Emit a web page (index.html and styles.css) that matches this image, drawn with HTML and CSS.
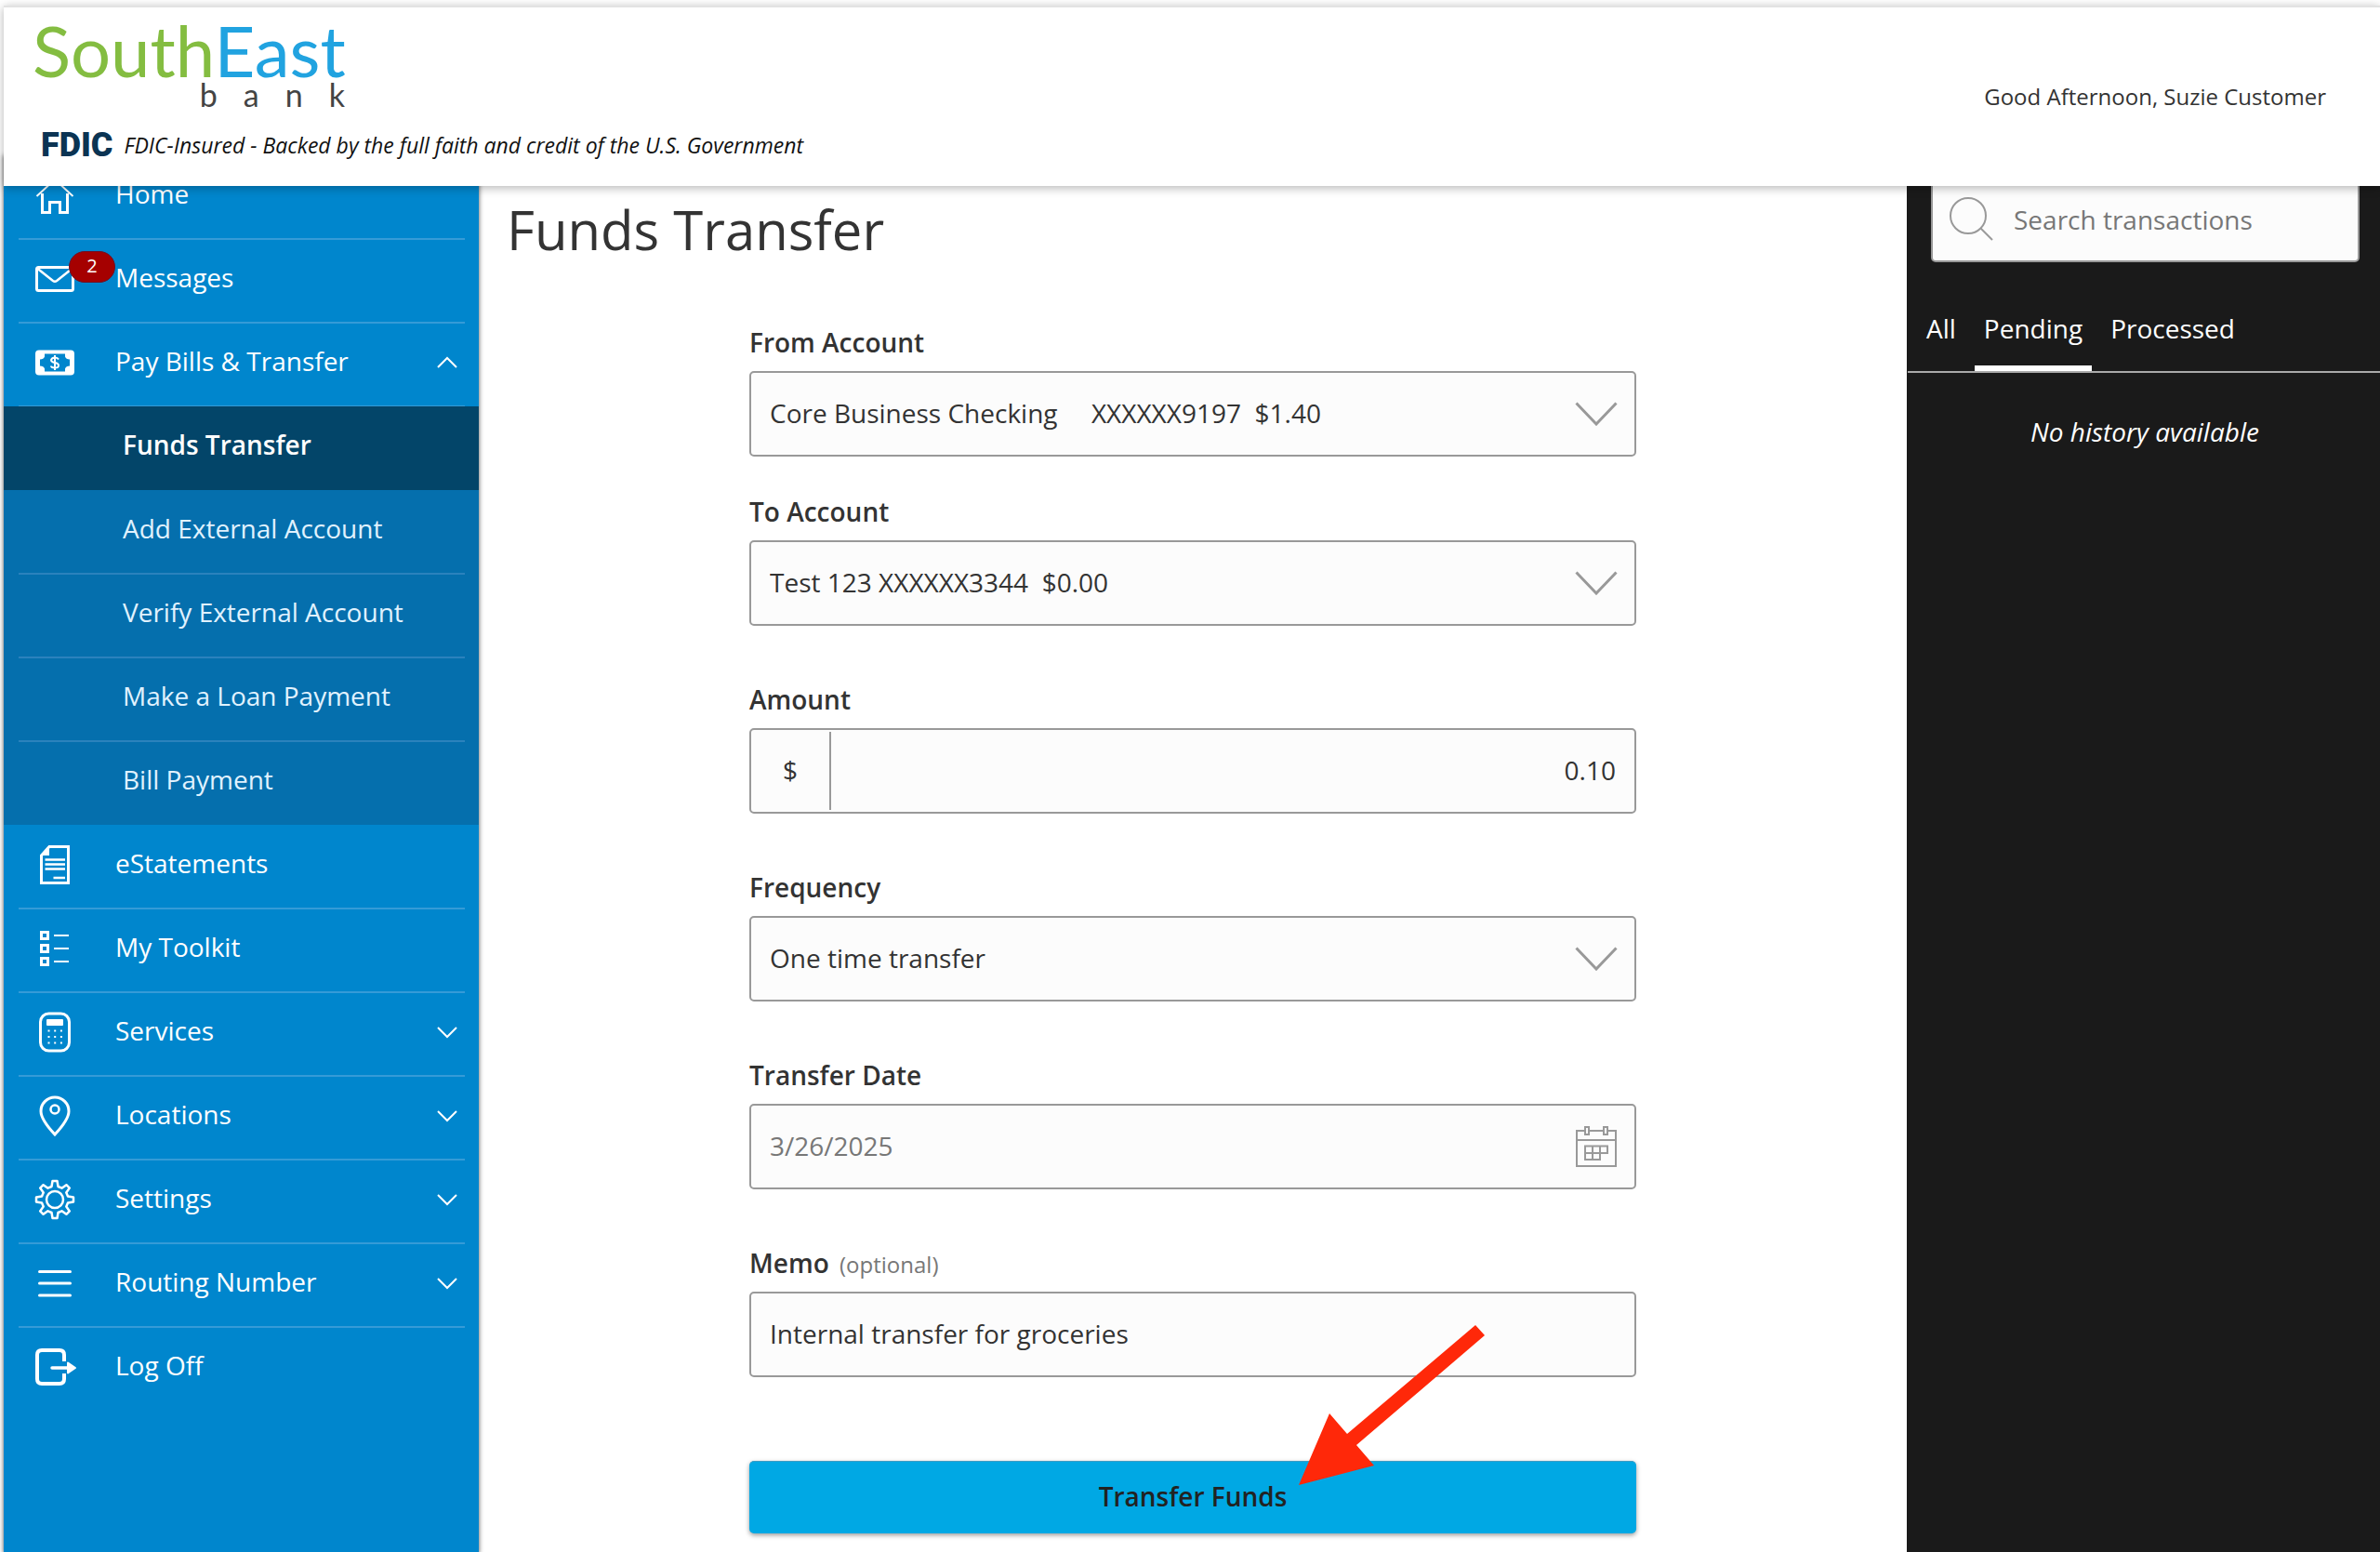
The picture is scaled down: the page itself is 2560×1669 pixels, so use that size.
FILE: index.html
```html
<!DOCTYPE html>
<html lang="en">
<head>
<meta charset="utf-8">
<meta name="viewport" content="width=device-width, initial-scale=1">
<title>Funds Transfer - SouthEast Bank</title>
<link rel="stylesheet" href="styles.css">
</head>
<body>
<div class="page">
  <header class="header">
    <div class="brand">
      <a class="logo" href="#"><span class="logo-name"><span class="logo-south">South</span><span class="logo-east">East</span></span><span class="logo-bank">bank</span></a>
      <p class="fdic"><span class="fdic-mark">FDIC</span><span class="fdic-text">FDIC-Insured - Backed by the full faith and credit of the U.S. Government</span></p>
    </div>
    <p class="greeting">Good Afternoon, Suzie Customer</p>
  </header>

  <div class="content">
    <nav class="nav" aria-label="Main">
      <ul class="menu">
        <li><a class="item" href="#">
          <svg class="icon" viewBox="0 0 44 44"><path d="M2.500 23 22 5l19.500 18" stroke-width="2"/><path d="M8.500 20v20.500h8V29.500h11v11h8V20" stroke-width="3"/></svg>
          <span class="text">Home</span></a></li>
        <li><a class="item" href="#">
          <svg class="icon" viewBox="0 0 44 44"><rect x="2.500" y="9.500" width="39" height="25" rx="2" stroke-width="3"/><path d="M3 10.500l17 13.500q2 1.500 4 0L41 10.500" stroke-width="2.500"/></svg>
          <span class="badge">2</span>
          <span class="text">Messages</span></a></li>
        <li><a class="item" href="#">
          <svg class="icon" viewBox="0 0 44 44"><rect x="1" y="8.500" width="42" height="27" rx="4" fill="#fff" stroke="none"/><path d="M11 12.500h22v3q1 3 5 3v7q-4 0-5 3v3H11v-3q-1-3-5-3v-7q4 0 5-3z" fill="#0086cd" stroke="none"/><path d="M26 18.500q-1-2-4-2t-4 2.500q0 2.300 4 3t4 3q0 2.500-4 2.500t-4-2M22 14v16" stroke-width="2"/></svg>
          <span class="text">Pay Bills &amp; Transfer</span>
          <svg class="chev" viewBox="0 0 24 14"><path d="M2 12 12 2l10 10"/></svg></a>
          <ul class="submenu">
            <li><a class="item active" href="#" aria-current="page"><span class="text">Funds Transfer</span></a></li>
            <li><a class="item" href="#"><span class="text">Add External Account</span></a></li>
            <li><a class="item" href="#"><span class="text">Verify External Account</span></a></li>
            <li><a class="item" href="#"><span class="text">Make a Loan Payment</span></a></li>
            <li><a class="item" href="#"><span class="text">Bill Payment</span></a></li>
          </ul></li>
        <li><a class="item" href="#">
          <svg class="icon" viewBox="0 0 44 44"><path d="M7.500 12 16 2.500h20.500v39h-29z" stroke-width="3"/><path d="M6 12 16 1v11z" fill="#fff" stroke="none"/><path d="M11.500 16.500h21.500M11.500 21.500h21.500M11.500 26.500h21.500M20.500 36H33" stroke-width="2.500"/></svg>
          <span class="text">eStatements</span></a></li>
        <li><a class="item" href="#">
          <svg class="icon" viewBox="0 0 44 44"><path d="M7.500 4.500h7v7h-7zM7.500 18.500h7v7h-7zM7.500 32.500h7v7h-7z" stroke-width="3"/><path d="M21 8h16M21 22h16M21 36h16" stroke-width="2"/></svg>
          <span class="text">My Toolkit</span></a></li>
        <li><a class="item" href="#">
          <svg class="icon" viewBox="0 0 44 44"><rect x="6.500" y="2" width="31" height="40" rx="9" stroke-width="3"/><rect x="13" y="8" width="18" height="7" rx="1" fill="#fff" stroke="none"/><path d="M14.500 20.500h15.500M14.500 27h15.500M14.500 33.500h15.500" stroke-width="2" stroke-dasharray="2 4.700"/></svg>
          <span class="text">Services</span>
          <svg class="chev" viewBox="0 0 24 14"><path d="M2 2l10 10L22 2"/></svg></a></li>
        <li><a class="item" href="#">
          <svg class="icon" viewBox="0 0 44 44"><path d="M22 42Q7 26 7 17a15 15 0 0 1 30 0Q37 26 22 42z" stroke-width="3"/><circle cx="22" cy="15" r="4.500" stroke-width="2.500"/></svg>
          <span class="text">Locations</span>
          <svg class="chev" viewBox="0 0 24 14"><path d="M2 2l10 10L22 2"/></svg></a></li>
        <li><a class="item" href="#">
          <svg class="icon" viewBox="0 0 44 44"><path stroke-width="2.500" stroke-linejoin="round" d="M18.500 8 19.500 2h5l1 6 4 1.700 4.900-3.500 3.400 3.400-3.500 4.900 1.700 4 6 1v5l-6 1-1.700 4 3.500 4.900-3.400 3.400-4.900-3.500-4 1.700-1 6h-5l-1-6-4-1.700-4.900 3.500-3.400-3.400 3.500-4.900-1.700-4-6-1v-5l6-1 1.700-4-3.500-4.900 3.400-3.400 4.900 3.500z"/><circle cx="22" cy="22" r="9" stroke-width="2.500"/></svg>
          <span class="text">Settings</span>
          <svg class="chev" viewBox="0 0 24 14"><path d="M2 2l10 10L22 2"/></svg></a></li>
        <li><a class="item" href="#">
          <svg class="icon" viewBox="0 0 44 44"><path d="M5.500 9.500h33M5.500 22h33M5.500 35h33" stroke-width="3" stroke-linecap="round"/></svg>
          <span class="text">Routing Number</span>
          <svg class="chev" viewBox="0 0 24 14"><path d="M2 2l10 10L22 2"/></svg></a></li>
        <li><a class="item last" href="#">
          <svg class="icon" viewBox="0 0 44 44"><path d="M32 16V9q0-5-5-5H8Q3 4 3 9v26q0 5 5 5h19q5 0 5-5v-6" stroke-width="4"/><path d="M19 23h18" stroke-width="3.500" stroke-linecap="round"/><path d="M36 17.500 44 23l-8 5.500z" fill="#fff" stroke-width="2" stroke-linejoin="round"/></svg>
          <span class="text">Log Off</span></a></li>
      </ul>
    </nav>

    <main class="main">
      <h1 class="title">Funds Transfer</h1>
      <form class="form">
        <div class="field near">
          <label for="from">From Account</label>
          <div class="control"><select id="from"><option>Core Business Checking&nbsp;&nbsp;&nbsp;&nbsp; XXXXXX9197&nbsp; $1.40</option></select>
            <svg class="arrow" viewBox="0 0 46 26"><path d="M1.500 1.500 23 24 44.500 1.500"/></svg></div>
        </div>
        <div class="field">
          <label for="to">To Account</label>
          <div class="control"><select id="to"><option>Test 123 XXXXXX3344&nbsp; $0.00</option></select>
            <svg class="arrow" viewBox="0 0 46 26"><path d="M1.500 1.500 23 24 44.500 1.500"/></svg></div>
        </div>
        <div class="field">
          <label for="amount">Amount</label>
          <div class="control"><span class="prefix">$</span><input class="amount" id="amount" type="text" value="0.10"></div>
        </div>
        <div class="field">
          <label for="frequency">Frequency</label>
          <div class="control"><select id="frequency"><option>One time transfer</option></select>
            <svg class="arrow" viewBox="0 0 46 26"><path d="M1.500 1.500 23 24 44.500 1.500"/></svg></div>
        </div>
        <div class="field">
          <label for="date">Transfer Date</label>
          <div class="control"><input class="date" id="date" type="text" value="3/26/2025">
            <svg class="calendar" viewBox="0 0 46 46"><path d="M10 6H2v38h42V6h-8M15 6h16M2 16h42M11 2h4v8h-4zM31 2h4v8h-4zM11 22.500h24v7.500h-8v7H11zM11 30h16M19 22.500V37M27 22.500V30"/></svg></div>
        </div>
        <div class="field">
          <label for="memo">Memo <span class="optional">(optional)</span></label>
          <div class="control"><input id="memo" type="text" value="Internal transfer for groceries"></div>
        </div>
        <div class="actions">
          <button class="submit" type="submit">Transfer Funds</button>
          <svg class="pointer" viewBox="0 0 200 172" aria-hidden="true"><path d="M0 172 33 95 52 117 190 0 200 11 62 129 81 151z"/></svg>
        </div>
      </form>
    </main>

    <aside class="history">
      <div class="search">
        <svg class="glass" viewBox="0 0 50 50"><circle cx="21" cy="21" r="19"/><path d="M34 34l13 13"/></svg>
        <input type="search" placeholder="Search transactions" aria-label="Search transactions">
      </div>
      <div class="tabs">
        <a class="tab" href="#">All</a>
        <a class="tab current" href="#">Pending</a>
        <a class="tab" href="#">Processed</a>
      </div>
      <p class="empty">No history available</p>
    </aside>
  </div>
</div>
</body>
</html>
```

FILE: styles.css
```css
* { box-sizing: border-box; }

body {
  margin: 0;
  background: #fff;
  color: #333;
  font-family: "Open Sans", "Noto Sans", sans-serif;
  font-size: 28px;
  line-height: 38px;
}

p, h1, ul { margin: 0; padding: 0; }
ul { list-style: none; }
a { color: inherit; text-decoration: none; }
svg { display: block; flex: none; fill: none; }

.page {
  display: flex;
  flex-direction: column;
  min-height: 100vh;
  padding: 6px 0 0 4px;
}

/* Header */
.header {
  position: relative;
  z-index: 2;
  display: flex;
  justify-content: space-between;
  height: 194px;
  padding: 8px 58px 0 31px;
  border-top: 2px solid #e2e2e2;
  background: #fff;
  box-shadow: 0 2px 10px rgba(0, 0, 0, .3);
}

.logo {
  display: flex;
  flex-direction: column;
  width: 336px;
  font-family: Lato, sans-serif;
}
.logo-name { font-size: 76px; line-height: 76px; }
.logo-south { color: #84bd41; }
.logo-east { color: #21a3e0; }
.logo-bank {
  margin-right: -28px;
  color: #444;
  font-size: 34px;
  line-height: 20px;
  letter-spacing: 28px;
  text-align: right;
}
.fdic {
  display: flex;
  align-items: center;
  gap: 12px;
  padding: 21px 0 0 9px;
  color: #111;
}
.fdic-mark {
  color: #0b3453;
  font: 900 36px/46px Roboto, sans-serif;
}
.fdic-text { font-size: 23px; font-style: italic; }
.greeting { padding-top: 69px; font-size: 24px; }

/* Page columns, scrolled partly under the header */
.content {
  display: grid;
  grid-template-columns: 511px 1fr 509px;
  flex: 1;
  margin-top: -33px;
}

/* Side navigation */
.nav {
  background: #0086cd;
  box-shadow: 0 0 5px rgba(0, 0, 0, .7);
  color: #fff;
}
.item {
  position: relative;
  display: flex;
  align-items: center;
  height: 90px;
  padding: 0 22px 5px 33px;
}
.item::after {
  content: "";
  position: absolute;
  right: 15px;
  bottom: -1px;
  left: 16px;
  height: 2px;
  background: #359bd7;
}
.item .text { flex: 1; padding-bottom: 3px; }
.icon {
  width: 44px;
  height: 44px;
  margin-right: 43px;
  overflow: visible;
  stroke: #fff;
}
.chev { width: 24px; height: 14px; stroke: #fff; stroke-width: 2; }
.badge {
  position: absolute;
  top: 13px;
  left: 70px;
  width: 50px;
  height: 34px;
  border: 1px solid #6d1127;
  border-radius: 17px;
  background: #a50000;
  font-size: 20px;
  line-height: 30px;
  text-align: center;
}
.submenu { background: #056fad; color: #e0f2ff; }
.submenu .item { padding-left: 128px; }
.submenu .item::after { background: #2b82bd; }
.submenu .active { background: #034569; color: #fff; font-weight: 600; }
.submenu .active::after,
.submenu li:last-child .item::after,
.last::after { display: none; }

/* Transfer form */
.title {
  padding: 40px 30px 0;
  font-size: 58px;
  font-weight: 400;
  line-height: 80px;
}
.form {
  width: 100%;
  max-width: 954px;
  margin: 62px auto 22px;
}
.field { margin-bottom: 60px; }
.near { margin-bottom: 40px; }
.field label { display: block; height: 38px; margin-bottom: 12px; font-weight: 600; }
.optional { margin-left: 4px; color: #777; font-size: 24px; font-weight: 400; line-height: 24px; }
.control {
  position: relative;
  display: flex;
  align-items: center;
  height: 92px;
  border: 2px solid #999;
  border-radius: 5px;
  background: #fcfcfc;
}
.control select,
.control input {
  flex: 1;
  min-width: 0;
  height: 100%;
  padding: 0 20px 3px;
  border: 0;
  outline: 0;
  appearance: none;
  background: transparent;
  color: inherit;
  font: inherit;
}
.control .date { color: #777; }
.control .amount { text-align: right; }
.prefix {
  align-self: stretch;
  width: 86px;
  margin: 2px 0;
  border-right: 2px solid #999;
  line-height: 82px;
  text-align: center;
}
.arrow,
.calendar {
  position: absolute;
  right: 18px;
  stroke: #999;
  pointer-events: none;
}
.arrow { width: 46px; height: 26px; stroke-width: 3; }
.calendar { width: 46px; height: 46px; stroke-width: 2; }

.actions { position: relative; padding-top: 30px; }
.submit {
  display: block;
  width: 100%;
  height: 78px;
  padding: 0 0 3px;
  border: 0;
  border-top: 1px solid #3b9cc4;
  border-radius: 5px;
  background: #00a8e4;
  box-shadow: 0 2px 5px rgba(0, 0, 0, .4);
  color: #222;
  font: inherit;
  font-weight: 600;
}
.pointer {
  position: absolute;
  top: -116px;
  right: 163px;
  width: 200px;
  height: 172px;
  fill: #ff2809;
  pointer-events: none;
}

/* Transaction history */
.history { background: #1a1a1a; color: #fff; }
.search {
  display: flex;
  align-items: center;
  height: 92px;
  margin: 23px 22px 0 26px;
  padding-left: 17px;
  border: 2px solid #999;
  border-radius: 5px;
  background: #fcfcfc;
}
.glass { width: 50px; height: 50px; stroke: #999; stroke-width: 2; }
.search input {
  flex: 1;
  min-width: 0;
  padding: 0 0 0 20px;
  border: 0;
  outline: 0;
  appearance: none;
  background: transparent;
  font: inherit;
}
.search input::placeholder { color: #777; }
.tabs {
  display: flex;
  gap: 10px;
  margin: 45px 0 0 1px;
  padding-left: 10px;
  border-bottom: 2px solid #aaa;
}
.tab { padding: 7px 10px 21px; border-bottom: 6px solid transparent; }
.current { border-color: #fff; }
.empty { padding: 44px 0 0 3px; font-style: italic; text-align: center; }
```
